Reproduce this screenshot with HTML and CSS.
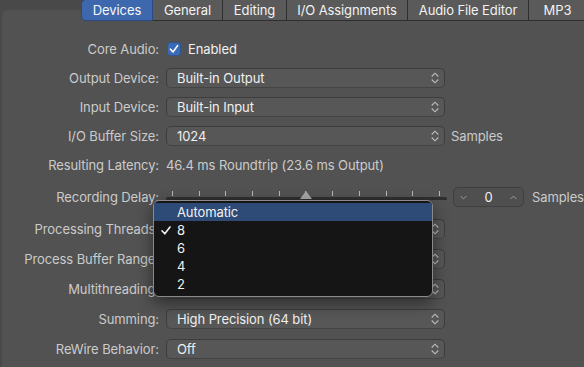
FILE: index.html
```html
<!DOCTYPE html>
<html>
<head>
<meta charset="utf-8">
<link rel="stylesheet" href="styles.css">
</head>
<body>
<div class="window">
  <div class="tabs">
    <div class="tab active w-devices">Devices</div>
    <div class="tab w-general">General</div>
    <div class="tab w-editing">Editing</div>
    <div class="tab w-io">I/O Assignments</div>
    <div class="tab w-afe">Audio File Editor</div>
    <div class="tab w-mp3">MP3</div>
  </div>
  <div class="panel">
    <div class="form">
      <div class="row">
        <div class="label">Core Audio:</div>
        <div class="ctrl">
          <svg class="checkbox" width="14" height="14" viewBox="0 0 14 14"><rect x="0.5" y="0.5" width="13" height="13" rx="3" fill="#3c6bb5" stroke="#2d5493"/><path d="M3.5 7.2 L6 10 L10.6 3.6" fill="none" stroke="#fff" stroke-width="1.6" stroke-linecap="round" stroke-linejoin="round"/></svg>
          <span class="value cb-text">Enabled</span>
        </div>
      </div>
      <div class="row">
        <div class="label">Output Device:</div>
        <div class="ctrl"><div class="popup"><span>Built-in Output</span><svg class="updown" width="8" height="12" viewBox="0 0 8 12"><path d="M0.7 4.5 L4 1.2 L7.3 4.5 M0.7 7.5 L4 10.8 L7.3 7.5" fill="none" stroke="#bdbdbd" stroke-width="1.1"/></svg></div></div>
      </div>
      <div class="row">
        <div class="label">Input Device:</div>
        <div class="ctrl"><div class="popup"><span>Built-in Input</span><svg class="updown" width="8" height="12" viewBox="0 0 8 12"><path d="M0.7 4.5 L4 1.2 L7.3 4.5 M0.7 7.5 L4 10.8 L7.3 7.5" fill="none" stroke="#bdbdbd" stroke-width="1.1"/></svg></div></div>
      </div>
      <div class="row">
        <div class="label">I/O Buffer Size:</div>
        <div class="ctrl"><div class="popup"><span>1024</span><svg class="updown" width="8" height="12" viewBox="0 0 8 12"><path d="M0.7 4.5 L4 1.2 L7.3 4.5 M0.7 7.5 L4 10.8 L7.3 7.5" fill="none" stroke="#bdbdbd" stroke-width="1.1"/></svg></div><span class="unit">Samples</span></div>
      </div>
      <div class="row">
        <div class="label">Resulting Latency:</div>
        <div class="ctrl"><span class="info">46.4 ms Roundtrip (23.6 ms Output)</span></div>
      </div>
      <div class="row delay">
        <div class="label">Recording Delay:</div>
        <div class="ctrl">
          <div class="slider">
            <div class="ticks">
              <i class="tick"></i><i class="tick"></i><i class="tick"></i><i class="tick"></i><i class="tick"></i><i class="tick"></i><i class="tick"></i><i class="tick"></i><i class="tick"></i><i class="tick"></i><i class="tick"></i>
            </div>
            <div class="track"></div>
            <div class="thumb"></div>
          </div>
          <div class="stepper">
            <svg width="7" height="5" viewBox="0 0 7 5"><path d="M0.6 1 L3.5 3.9 L6.4 1" fill="none" stroke="#9c9c9c" stroke-width="1"/></svg>
            <span class="value">0</span>
            <svg width="7" height="5" viewBox="0 0 7 5"><path d="M0.6 4 L3.5 1.1 L6.4 4" fill="none" stroke="#9c9c9c" stroke-width="1"/></svg>
          </div>
          <span class="unit unit-wide">Samples</span>
        </div>
      </div>
      <div class="row threads">
        <div class="label">Processing Threads:</div>
        <div class="ctrl"><div class="popup"><span></span><svg class="updown" width="8" height="12" viewBox="0 0 8 12"><path d="M0.7 4.5 L4 1.2 L7.3 4.5 M0.7 7.5 L4 10.8 L7.3 7.5" fill="none" stroke="#bdbdbd" stroke-width="1.1"/></svg></div></div>
      </div>
      <div class="row lower">
        <div class="label">Process Buffer Range:</div>
        <div class="ctrl"><div class="popup"><span></span><svg class="updown" width="8" height="12" viewBox="0 0 8 12"><path d="M0.7 4.5 L4 1.2 L7.3 4.5 M0.7 7.5 L4 10.8 L7.3 7.5" fill="none" stroke="#bdbdbd" stroke-width="1.1"/></svg></div></div>
      </div>
      <div class="row lower">
        <div class="label">Multithreading:</div>
        <div class="ctrl"><div class="popup"><span></span><svg class="updown" width="8" height="12" viewBox="0 0 8 12"><path d="M0.7 4.5 L4 1.2 L7.3 4.5 M0.7 7.5 L4 10.8 L7.3 7.5" fill="none" stroke="#bdbdbd" stroke-width="1.1"/></svg></div></div>
      </div>
      <div class="row lower">
        <div class="label">Summing:</div>
        <div class="ctrl"><div class="popup"><span>High Precision (64 bit)</span><svg class="updown" width="8" height="12" viewBox="0 0 8 12"><path d="M0.7 4.5 L4 1.2 L7.3 4.5 M0.7 7.5 L4 10.8 L7.3 7.5" fill="none" stroke="#bdbdbd" stroke-width="1.1"/></svg></div></div>
      </div>
      <div class="row lower">
        <div class="label">ReWire Behavior:</div>
        <div class="ctrl"><div class="popup"><span>Off</span><svg class="updown" width="8" height="12" viewBox="0 0 8 12"><path d="M0.7 4.5 L4 1.2 L7.3 4.5 M0.7 7.5 L4 10.8 L7.3 7.5" fill="none" stroke="#bdbdbd" stroke-width="1.1"/></svg></div></div>
      </div>
    </div>

    <div class="menu">
      <div class="item hl"><span class="check"></span><span>Automatic</span></div>
      <div class="item"><span class="check"><svg width="10" height="9" viewBox="0 0 10 9"><path d="M1 4.8 L3.8 7.8 L9 1" fill="none" stroke="#f2f2f2" stroke-width="1.6" stroke-linecap="round" stroke-linejoin="round"/></svg></span><span>8</span></div>
      <div class="item"><span class="check"></span><span>6</span></div>
      <div class="item"><span class="check"></span><span>4</span></div>
      <div class="item"><span class="check"></span><span>2</span></div>
    </div>
  </div>
</div>
</body>
</html>
```

FILE: styles.css
```css
* { box-sizing: border-box; }
html, body { margin: 0; padding: 0; }
body {
  width: 584px;
  height: 367px;
  overflow: hidden;
  background: #494949;
  font-family: Inter, "Liberation Sans", sans-serif;
  font-size: 13px;
  letter-spacing: -0.1px;
}
.window {
  height: 100%;
  display: flex;
  flex-direction: column;
}
.tabs {
  display: flex;
  margin-left: 81px;
  margin-top: -1px;
  height: 22px;
  position: relative;
  z-index: 2;
}
.tab {
  height: 22px;
  display: flex;
  align-items: center;
  justify-content: center;
  background: #5a5a5a;
  border: 1px solid #2f2f2f;
  border-left: none;
  color: #f2f2f2;
  flex-shrink: 0;
}
.tab.active {
  background: #3e68ae;
  border: 1px solid #2a4a82;
  border-radius: 5px 0 0 5px;
  color: #f6f8fb;
}
.w-devices { width: 72px; }
.w-general { width: 70px; }
.w-editing { width: 64px; }
.w-io { width: 121px; }
.w-afe { width: 121px; }
.w-mp3 { width: 58px; }

.panel {
  flex: 1;
  margin-top: -11px;
  margin-left: 2px;
  background: #525252;
  border-top-left-radius: 6px;
  position: relative;
  padding-top: 29px;
}
.form {
  display: flex;
  flex-direction: column;
  gap: 9px;
}
.row {
  display: flex;
  align-items: center;
  height: 20px;
}
.row.delay { margin-top: 3px; }
.row.threads { margin-top: 3px; }
.row.lower { margin-top: 1px; }
.label {
  width: 157px;
  flex-shrink: 0;
  text-align: right;
  color: #cbcbcb;
  white-space: nowrap;
}
.ctrl {
  margin-left: 7px;
  display: flex;
  align-items: center;
  height: 20px;
}
.value { color: #f0f0f0; }
.checkbox { margin-left: 1px; display: block; }
.cb-text { margin-left: 7px; }
.info { color: #cbcbcb; white-space: nowrap; }
.popup {
  width: 279px;
  height: 20px;
  border: 1px solid #3d3d3d;
  border-bottom-color: #444;
  background: #575757;
  border-radius: 5px;
  padding: 0 5px 0 10px;
  display: flex;
  align-items: center;
  justify-content: space-between;
  color: #f0f0f0;
  white-space: nowrap;
}
.updown { display: block; }
.unit {
  margin-left: 6px;
  color: #cbcbcb;
}
.unit-wide { margin-left: 8px; }

.slider {
  width: 281px;
  height: 20px;
  position: relative;
  display: flex;
  flex-direction: column;
}
.ticks {
  display: flex;
  justify-content: space-between;
  padding: 0 7px 0 6px;
  margin-top: 4px;
  height: 5px;
}
.tick {
  width: 1px;
  background: #b8b8b8;
}
.track {
  margin-top: 1px;
  height: 3px;
  background: #2f2f2f;
  border-radius: 2px;
}
.thumb {
  position: absolute;
  left: 134px;
  top: 4px;
  width: 12px;
  height: 8px;
  background: #a6a6a6;
  clip-path: polygon(50% 0, 100% 100%, 0 100%);
}
.stepper {
  margin-left: 6px;
  width: 71px;
  height: 20px;
  border: 1px solid #3f3f3f;
  background: #4f4f4f;
  border-radius: 5px;
  display: flex;
  align-items: center;
  justify-content: space-between;
  padding: 0 6px;
}
.stepper svg { display: block; }

.menu {
  position: absolute;
  left: 151px;
  top: 190px;
  width: 280px;
  height: 97px;
  background: #151515;
  border: 1px solid #8a8a8a;
  border-radius: 6px;
  padding-top: 2px;
  box-shadow: 0 6px 16px rgba(0, 0, 0, 0.45);
  z-index: 3;
}
.item {
  height: 18px;
  display: flex;
  align-items: center;
  color: #f2f2f2;
}
.item.hl { background: #2e4a76; }
.check {
  width: 16px;
  margin-left: 7px;
  display: flex;
  align-items: center;
}
.check svg { display: block; }
```
